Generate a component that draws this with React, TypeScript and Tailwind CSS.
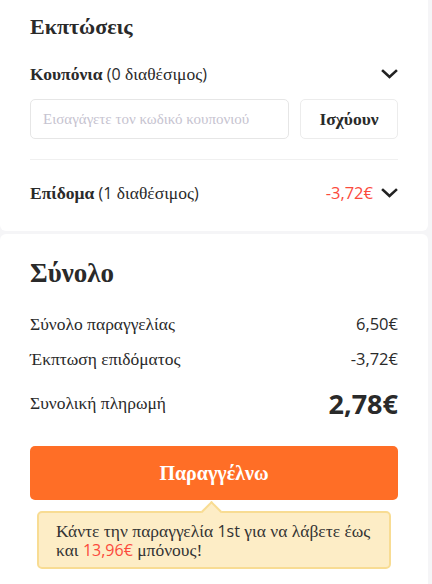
import React from "react";

const serif = { fontFamily: '"Liberation Serif", "Times New Roman", serif' };
const sans = { fontFamily: '"Open Sans", "Liberation Sans", sans-serif' };

function Chevron() {
  return (
    <svg width="17" height="10" viewBox="0 0 17 10" className="shrink-0">
      <polyline points="2,2 8.5,8 15,2" fill="none" stroke="#222" strokeWidth="2.6" strokeLinecap="square" />
    </svg>
  );
}

function N({ children, className = "" }: { children: React.ReactNode; className?: string }) {
  return (
    <span className={"leading-none " + className} style={sans}>
      {children}
    </span>
  );
}

export default function App() {
  return (
    <div className="min-h-screen w-[432px] bg-[#f5f5f7] text-[#2a2a2a]" style={serif}>
      <div className="w-[428px] bg-white rounded-b-[6px] px-[30px] pt-[12px] pb-[26px]">
        <div className="h-[30px] flex items-center text-[22px] font-bold leading-[30px]">Εκπτώσεις</div>
        <div className="mt-[20px] h-[24px] flex items-center justify-between text-[17.5px]">
          <div>
            <span className="font-bold">Κουπόνια</span> <N className="text-[16px]">(0</N> διαθέσιμος<N className="text-[16px]">)</N>
          </div>
          <Chevron />
        </div>
        <div className="mt-[13px] flex gap-[11px]">
          <div className="w-[259px] h-[40px] border border-[#e6e6e6] rounded-[5px] flex items-center px-[12px] text-[15px] text-[#c6c3d0]">
            Εισαγάγετε τον κωδικό κουπονιού
          </div>
          <div className="flex-1 h-[40px] border border-[#ececec] rounded-[5px] flex items-center justify-center text-[17.5px] font-bold">
            Ισχύουν
          </div>
        </div>
        <div className="mt-[20px] border-t border-[#f0f0f0]" />
        <div className="mt-[21px] h-[24px] flex items-center justify-between text-[17.5px]">
          <div>
            <span className="font-bold">Επίδομα</span> <N className="text-[16px]">(1</N> διαθέσιμος<N className="text-[16px]">)</N>
          </div>
          <div className="flex items-center gap-[8px]">
            <N className="text-[16.5px] text-[#fb4a3c]">-3,72€</N>
            <Chevron />
          </div>
        </div>
      </div>
      <div className="mt-[3px] w-[428px] bg-white rounded-t-[6px] px-[30px] pt-[23px] pb-[20px]">
        <div className="h-[32px] flex items-center text-[27px] font-bold">Σύνολο</div>
        <div className="mt-[23px] h-[24px] flex items-center justify-between text-[17.5px]">
          <span>Σύνολο παραγγελίας</span>
          <N className="text-[16.5px]">6,50€</N>
        </div>
        <div className="mt-[11px] h-[24px] flex items-center justify-between text-[17.5px]">
          <span>Έκπτωση επιδόματος</span>
          <N className="text-[16.5px]">-3,72€</N>
        </div>
        <div className="mt-[14px] h-[36px] flex items-center justify-between text-[17.5px]">
          <span>Συνολική πληρωμή</span>
          <N className="text-[27px] font-bold">2,78€</N>
        </div>
        <div className="mt-[25px] h-[54px] rounded-[5px] bg-[#ff6e26] flex items-center justify-center text-white text-[20px] font-bold">
          Παραγγέλνω
        </div>
        <div className="relative mt-[11px] mx-[7px] rounded-[5px] border-2 border-[#f8dc93] bg-[#fdedc6] px-[17px] pt-[9px] pb-[7px] text-[17.5px] leading-[19px] text-[#333]">
          <div className="absolute left-[165px] top-[-9px] w-[15px] h-[15px] rotate-45 bg-[#fdedc6] border-l-2 border-t-2 border-[#f8dc93]" />
          <div className="relative">
            Κάντε την παραγγελία <N className="text-[16px]">1st</N> για να λάβετε έως
            <br />
            και <N className="text-[16px] text-[#fb4a3c]">13,96€</N> μπόνους!
          </div>
        </div>
      </div>
    </div>
  );
}
